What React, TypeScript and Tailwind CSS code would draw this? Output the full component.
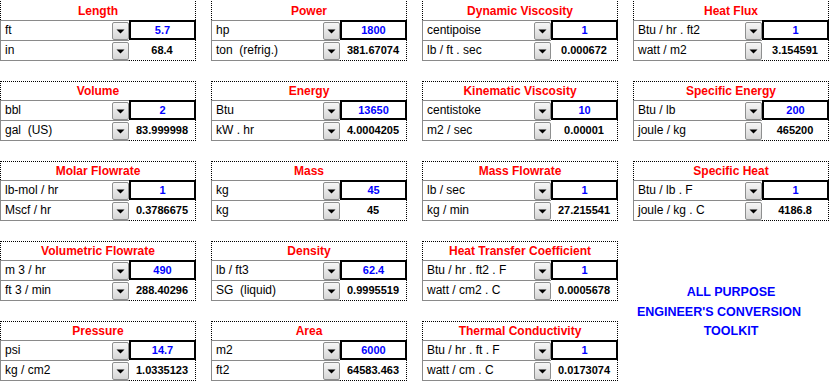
import React from "react";

type Conv = {
  title: string;
  u1: string;
  v1: string;
  u2: string;
  v2: string;
  thin?: boolean;
};

const rows: Conv[][] = [
  [
    { title: "Length", u1: "ft", v1: "5.7", u2: "in", v2: "68.4" },
    { title: "Power", u1: "hp", v1: "1800", u2: "ton  (refrig.)", v2: "381.67074" },
    { title: "Dynamic Viscosity", u1: "centipoise", v1: "1", u2: "lb / ft . sec", v2: "0.000672" },
    { title: "Heat Flux", u1: "Btu / hr . ft2", v1: "1", u2: "watt / m2", v2: "3.154591" },
  ],
  [
    { title: "Volume", u1: "bbl", v1: "2", u2: "gal  (US)", v2: "83.999998", thin: true },
    { title: "Energy", u1: "Btu", v1: "13650", u2: "kW . hr", v2: "4.0004205", thin: true },
    { title: "Kinematic Viscosity", u1: "centistoke", v1: "10", u2: "m2 / sec", v2: "0.00001" },
    { title: "Specific Energy", u1: "Btu / lb", v1: "200", u2: "joule / kg", v2: "465200" },
  ],
  [
    { title: "Molar Flowrate", u1: "lb-mol / hr", v1: "1", u2: "Mscf / hr", v2: "0.3786675" },
    { title: "Mass", u1: "kg", v1: "45", u2: "kg", v2: "45" },
    { title: "Mass Flowrate", u1: "lb / sec", v1: "1", u2: "kg / min", v2: "27.215541" },
    { title: "Specific Heat", u1: "Btu / lb . F", v1: "1", u2: "joule / kg . C", v2: "4186.8" },
  ],
  [
    { title: "Volumetric Flowrate", u1: "m 3 / hr", v1: "490", u2: "ft 3 / min", v2: "288.40296" },
    { title: "Density", u1: "lb / ft3", v1: "62.4", u2: "SG  (liquid)", v2: "0.9995519" },
    { title: "Heat Transfer Coefficient", u1: "Btu / hr . ft2 . F", v1: "1", u2: "watt / cm2 . C", v2: "0.0005678" },
  ],
  [
    { title: "Pressure", u1: "psi", v1: "14.7", u2: "kg / cm2", v2: "1.0335123" },
    { title: "Area", u1: "m2", v1: "6000", u2: "ft2", v2: "64583.463" },
    { title: "Thermal Conductivity", u1: "Btu / hr . ft . F", v1: "1", u2: "watt / cm . C", v2: "0.0173074" },
  ],
];

function DropButton() {
  return (
    <div className="w-[17px] h-[18px] mt-px shrink-0 rounded-[2px] border border-[#8e8f8f] bg-gradient-to-b from-[#f6f6f6] to-[#d6d6d6] flex items-center justify-center">
      <svg width="9" height="5" viewBox="0 0 9 5">
        <polygon points="0.5,0.5 8.5,0.5 4.5,4.5" fill="#000" />
      </svg>
    </div>
  );
}

function Card({ c, noTop }: { c: Conv; noTop: boolean }) {
  return (
    <div className="flex flex-col w-[196px] h-[60px]">
      <div
        className={
          (noTop ? "border-x pt-px " : "border-t border-x ") +
          "h-[20px] border-dotted border-black flex items-center justify-center text-[12px] font-bold text-[#ff0000]"
        }
      >
        {c.title}
      </div>
      <div className="grid grid-cols-[129px_67px]">
        <div className="h-[20px] border-t border-l border-[#8a8a8a] flex items-start justify-between">
          <span className="pl-[4px] text-[12px] leading-[18px] whitespace-pre text-black">{c.u1}</span>
          <DropButton />
        </div>
        <div className="h-[20px] border-2 border-black flex items-center justify-center text-[11px] font-bold text-[#0000ff]">
          {c.v1}
        </div>
        <div className="h-[21px] border-t border-l border-b border-[#8a8a8a] flex items-start justify-between">
          <span className="pl-[4px] text-[12px] leading-[18px] whitespace-pre text-black">{c.u2}</span>
          <DropButton />
        </div>
        <div
          className={
            "h-[21px] border-r border-b border-dotted border-black flex items-center justify-center text-[11px] text-black " +
            (c.thin ? "font-semibold" : "font-bold")
          }
        >
          {c.v2}
        </div>
      </div>
    </div>
  );
}

export default function App() {
  return (
    <div className="w-[829px] h-[381px] bg-white overflow-hidden pt-px font-['Liberation_Sans',Arial,sans-serif]">
      <div className="grid grid-cols-[196px_196px_196px_196px] grid-rows-[60px_60px_60px_60px_60px] gap-x-[15px] gap-y-[20px]">
        {rows.slice(0, 3).map((r, ri) =>
          r.map((c) => <Card key={c.title} c={c} noTop={ri === 0} />)
        )}
        {rows[3].map((c) => (
          <Card key={c.title} c={c} noTop={false} />
        ))}
        <div className="row-span-2 flex flex-col items-center justify-center pt-[3px] text-[12.5px] font-bold leading-[19.5px] text-[#0000ff]">
          <div>ALL PURPOSE</div>
          <div className="pr-[24px]">ENGINEER'S CONVERSION</div>
          <div>TOOLKIT</div>
        </div>
        {rows[4].map((c) => (
          <Card key={c.title} c={c} noTop={false} />
        ))}
      </div>
    </div>
  );
}
